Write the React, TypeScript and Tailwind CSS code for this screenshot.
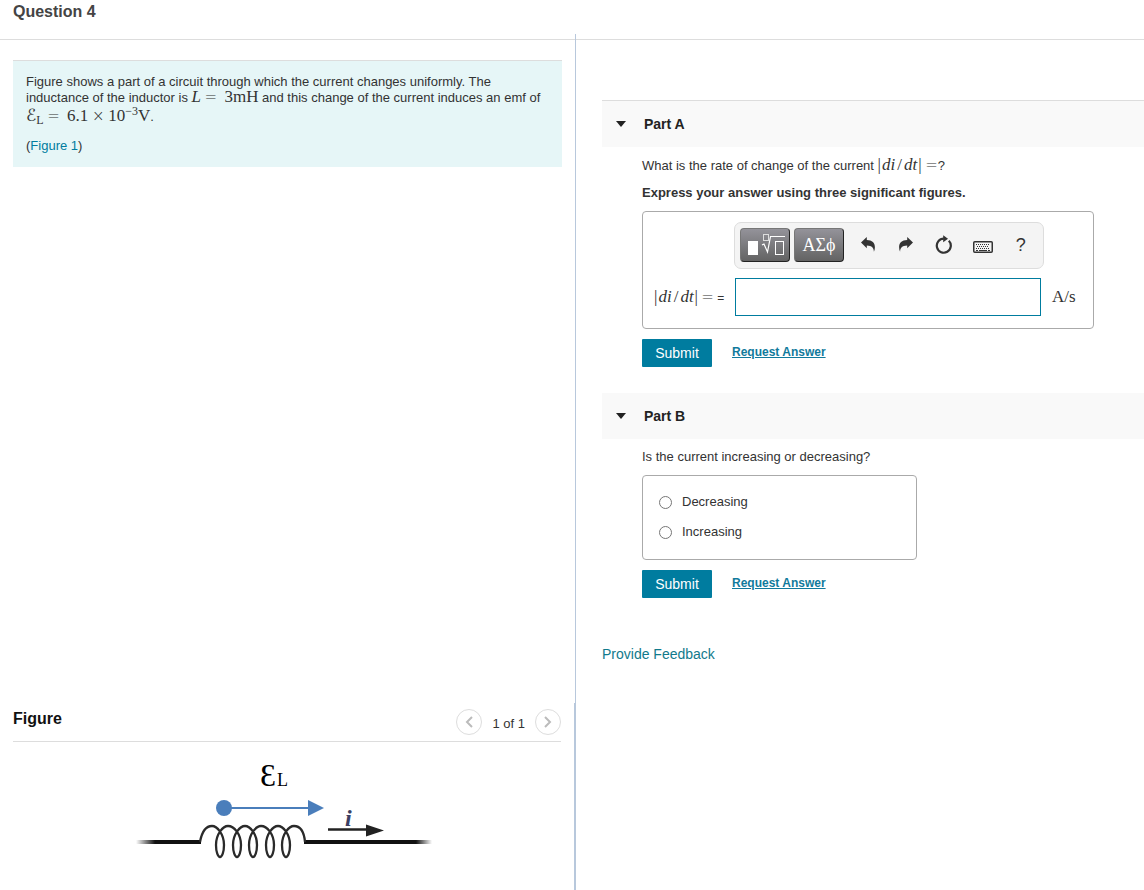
import { useState, type ReactNode } from "react";

const M = ({ children, italic }: { children: ReactNode; italic?: boolean }) => (
  <span
    className={
      italic
        ? "font-['Liberation_Serif',serif] text-[17px] leading-3 italic"
        : "font-['Liberation_Serif',serif] text-[17px] leading-3"
    }
  >
    {children}
  </span>
);

// relation and operator signs are set wider and lighter than the letters
const Op = ({ children }: { children: ReactNode }) => (
  <span className="font-['DejaVu_Sans',sans-serif] text-[15px] leading-3 font-extralight">
    {children}
  </span>
);

const Rate = () => (
  <span className="whitespace-nowrap">
    <M>|</M>
    <span className="px-px">
      <M italic>di</M>
    </span>
    <span className="px-px">
      <M>/</M>
    </span>
    <span className="px-px">
      <M italic>dt</M>
    </span>
    <M>|</M> <Op>=</Op>
  </span>
);

const UndoIcon = ({ flip }: { flip?: boolean }) => (
  <svg
    width="14"
    height="15"
    viewBox="0 0 14 15"
    fill="#333"
    className={flip ? "-scale-x-100" : ""}
  >
    <path d="M0 5.400 5.800 0v3c5.400.1 8.200 2.800 8.100 7.200 0 1.700-.4 3.300-1 4.600 0-3.900-1.900-6.300-7.100-6.400v2.800z" />
  </svg>
);

const ResetIcon = () => (
  <svg width="18" height="19" viewBox="0 0 18 19" fill="none">
    <path
      d="M13.800 5.800A7 7 0 1 1 8.800 3.700"
      stroke="#333"
      strokeWidth="2.200"
    />
    <path d="M8.200 0.200 13 3.700 8.200 7.200z" fill="#333" />
  </svg>
);

const KeyboardIcon = () => (
  <svg width="20" height="12" viewBox="0 0 20 12" fill="none">
    <rect x="0.750" y="0.750" width="18.500" height="10.500" rx="1" stroke="#333" strokeWidth="1.500" />
    <path
      d="M3 3.500h14M4 5.500h12M3 7.500h14"
      stroke="#333"
      strokeDasharray="1 1"
    />
    <path d="M3 9.500h2M6 9.500h8M15 9.500h2" stroke="#333" />
  </svg>
);

const TemplateIcon = () => (
  <svg width="40" height="24" viewBox="0 0 40 24" fill="none" stroke="#fff">
    <rect x="3" y="8" width="10" height="14" fill="#fff" stroke="none" />
    <rect x="18.500" y="1.500" width="5" height="6" stroke="#ddd" />
    <path d="M17 12l2-1 3.500 8 3-15.500H40" strokeWidth="1.200" />
    <rect x="30.500" y="8.500" width="8" height="13" />
  </svg>
);

type PartProps = { title: string; first?: boolean; children: ReactNode };

const Part = ({ title, first, children }: PartProps) => {
  const [open, setOpen] = useState(true);

  return (
    <section>
      <h2
        className={
          first ? "border-t border-[#ddd] bg-[#f9f9f9]" : "bg-[#f9f9f9]"
        }
      >
        <button
          type="button"
          aria-expanded={open}
          onClick={() => setOpen(!open)}
          className="flex h-[46px] w-full items-center gap-[18px] pl-[14px] text-left text-sm font-bold text-[#222]"
        >
          <svg width="10" height="6" viewBox="0 0 10 6" fill="#222">
            <path d="M0 0h10L5 6z" />
          </svg>
          {title}
        </button>
      </h2>
      {open && <div className="pl-10">{children}</div>}
    </section>
  );
};

const Actions = () => (
  <div className="mt-[10px] flex items-start gap-5">
    <button
      type="button"
      className="h-7 w-[70px] rounded-[1px] bg-[#007c9f] text-sm text-white"
    >
      Submit
    </button>
    <a href="#request" className="mt-[5px] text-xs font-bold text-[#117a9c] underline">
      Request Answer
    </a>
  </div>
);

const greyButton =
  "flex h-[34px] w-[50px] items-center justify-center rounded-[4px] border border-[#777] border-r-[#222] border-b-[#222] bg-linear-to-b from-[#94939a] to-[#636363] text-white";

const AnswerBox = () => (
  <div className="mt-[10px] flex w-[452px] max-w-full flex-col gap-[9px] rounded-[4px] border border-[#aaa] pt-[10px] pb-3">
    <div
      role="toolbar"
      className="ml-[91px] flex h-[47px] w-[310px] items-center rounded-[7px] border border-[#ddd] bg-[#f4f4f4] pb-[2px] pl-[5px]"
    >
      <button type="button" aria-label="Templates" className={greyButton}>
        <TemplateIcon />
      </button>
      <button
        type="button"
        className={`${greyButton} ml-1 font-['Liberation_Serif',serif] text-lg`}
      >
        ΑΣϕ
      </button>
      <div className="flex flex-1 items-center justify-around pr-[3px] pl-[5px]">
        <button type="button" aria-label="Undo" className="flex w-8 justify-center">
          <UndoIcon />
        </button>
        <button type="button" aria-label="Redo" className="flex w-8 justify-center">
          <UndoIcon flip />
        </button>
        <button type="button" aria-label="Reset" className="flex w-8 justify-center">
          <ResetIcon />
        </button>
        <button type="button" aria-label="Keyboard" className="flex w-8 justify-center pt-1">
          <KeyboardIcon />
        </button>
        <button type="button" className="w-8 text-lg text-[#333]">
          ?
        </button>
      </div>
    </div>
    <div className="flex items-center">
      <label htmlFor="rate" className="w-[92px] pt-px pl-[11px] text-xs whitespace-nowrap">
        <Rate /> =
      </label>
      <input
        id="rate"
        type="text"
        className="h-[38px] w-[306px] border border-[#007c9f] bg-white px-2 text-base outline-none"
      />
      <span className="pt-px pl-[11px]">
        <M>A/s</M>
      </span>
    </div>
  </div>
);

const loops = [85, 102, 118, 135, 151];
const coil =
  "M65 87C67 76 71 71 77 71" +
  loops
    .map(
      (x) =>
        `C${x - 3} 71 ${x + 4} 79 ${x + 4} 90C${x + 4} 97 ${x + 2} 102 ${x} 102C${x - 2} 102 ${x - 4} 97 ${x - 4} 90C${x - 4} 79 ${x + 3} 71 ${x + 8} 71`
    )
    .join("") +
  "C165 71 169 76 170 87";

const CircuitFigure = () => (
  <svg width="300" height="110" viewBox="0 0 300 110" role="img" aria-label="Inductor">
    <defs>
      <linearGradient id="wireLeft" gradientUnits="userSpaceOnUse" x1="1" x2="20" y1="0" y2="0">
        <stop offset="0" stopColor="#111" stopOpacity="0" />
        <stop offset="1" stopColor="#111" />
      </linearGradient>
      <linearGradient id="wireRight" gradientUnits="userSpaceOnUse" x1="281" x2="297" y1="0" y2="0">
        <stop offset="0" stopColor="#111" />
        <stop offset="1" stopColor="#111" stopOpacity="0" />
      </linearGradient>
    </defs>
    <text x="125" y="31" fontSize="32" fontFamily="Liberation Serif, serif">
      Ɛ
    </text>
    <text x="142" y="31" fontSize="18" fontFamily="Liberation Serif, serif">
      L
    </text>
    <circle cx="89" cy="53" r="8" fill="#4a7ebb" />
    <path d="M89 53h86" stroke="#4a7ebb" strokeWidth="2" />
    <path d="M173 45l16 8-16 8z" fill="#4a7ebb" />
    <text
      x="210"
      y="71"
      fontSize="24"
      fontStyle="italic"
      fontWeight="bold"
      fill="#3b3f63"
      fontFamily="Liberation Serif, serif"
    >
      i
    </text>
    <path d="M193 74.500h40" stroke="#222" strokeWidth="2.500" />
    <path d="M231 69.500l18 6-18 6z" fill="#222" />
    <rect x="1" y="85" width="65" height="4" fill="url(#wireLeft)" />
    <rect x="169" y="85" width="128" height="4" fill="url(#wireRight)" />
    <path d={coil} fill="none" stroke="#2a2a2a" strokeWidth="2.300" />
  </svg>
);

const Problem = () => (
  <div className="border-t border-[#ddd] bg-[#e6f6f7] px-[13px] py-[13px]">
    <p className="leading-4">
      Figure shows a part of a circuit through which the current changes
      uniformly. The inductance of the inductor is{" "}
      <span className="whitespace-nowrap">
        <M italic>L</M> <Op>=</Op>&nbsp; <M>3mH</M>
      </span>{" "}
      and this change of the current induces an emf of
      <span className="block pt-[3px] whitespace-nowrap">
        <span className="font-['DejaVu_Sans',sans-serif] text-[17px] leading-3">ℰ</span>
        <sub className="bottom-[-3px] font-['Liberation_Serif',serif] text-xs leading-none">
          L
        </sub>{" "}
        <Op>=</Op>&nbsp; <M>6.1</M> <Op>×</Op> <M>10</M>
        <sup className="font-['Liberation_Serif',serif] text-xs leading-none">−3</sup>
        <M>V</M>.
      </span>
    </p>
    <p className="mt-[13px] leading-4">
      (
      <a href="#figure" className="text-[#007c9f]">
        Figure 1
      </a>
      )
    </p>
  </div>
);

const pagerButton =
  "flex size-[26px] items-center justify-center rounded-full border border-[#ddd]";

const FigurePanel = () => (
  <section id="figure" className="border-r-2 border-[#b8c8dc] pt-[6px] pr-[13px] pl-[13px]">
    <div className="flex h-[33px] items-start justify-between border-b border-[#ddd]">
      <h2 className="text-base leading-[20px] font-bold text-[#111]">Figure</h2>
      <div className="flex items-center gap-[10px]">
        <button type="button" aria-label="Previous figure" className={pagerButton}>
          <svg width="8" height="12" viewBox="0 0 8 12" fill="none" stroke="#bbb" strokeWidth="2">
            <path d="M7 1 2 6l5 5" />
          </svg>
        </button>
        <span className="pt-1">1 of 1</span>
        <button type="button" aria-label="Next figure" className={pagerButton}>
          <svg width="8" height="12" viewBox="0 0 8 12" fill="none" stroke="#bbb" strokeWidth="2">
            <path d="m1 1 5 5-5 5" />
          </svg>
        </button>
      </div>
    </div>
    <div className="flex justify-center pt-[13px] pr-1 pb-[25px]">
      <CircuitFigure />
    </div>
  </section>
);

export default function App() {
  return (
    <div className="flex min-h-screen flex-col bg-white font-['Liberation_Sans',Arial,sans-serif] text-[13px] text-[#333]">
      <header className="border-b border-[#ddd] px-[13px] pt-[2px] pb-[17px]">
        <h1 className="text-base leading-5 font-bold text-[#444]">Question 4</h1>
      </header>
      <main className="relative -mt-[6px] flex flex-1">
        <div className="flex w-[calc(50%+4px)] flex-col">
          <div className="flex-1 border-r border-[#b8c8dc] pt-[26px] pr-[13px] pl-[13px]">
            <Problem />
          </div>
          <FigurePanel />
        </div>

        <div className="min-w-0 flex-1 pt-[66px] pl-[26px]">
          <Part title="Part A" first>
            <p className="pt-[11px] leading-4">
              What is the rate of change of the current <Rate />?
            </p>
            <p className="mt-[11px] leading-4 font-bold">
              Express your answer using three significant figures.
            </p>
            <AnswerBox />
            <Actions />
          </Part>

          <div className="mt-[26px]">
            <Part title="Part B">
              <fieldset>
                <legend className="pt-[10px] leading-4">
                  Is the current increasing or decreasing?
                </legend>
                <div className="mt-[10px] flex h-[85px] w-[275px] max-w-full flex-col gap-[14px] rounded-[4px] border border-[#aaa] pt-[18px] pl-4">
                  {["Decreasing", "Increasing"].map((option) => (
                    <label key={option} className="flex items-center gap-[10px] leading-4">
                      <input
                        type="radio"
                        name="direction"
                        value={option}
                        className="size-[13px]"
                      />
                      {option}
                    </label>
                  ))}
                </div>
              </fieldset>
              <Actions />
            </Part>
          </div>

          <a href="#feedback" className="mt-[46px] inline-block text-sm text-[#117a8c]">
            Provide Feedback
          </a>
        </div>
      </main>
    </div>
  );
}
